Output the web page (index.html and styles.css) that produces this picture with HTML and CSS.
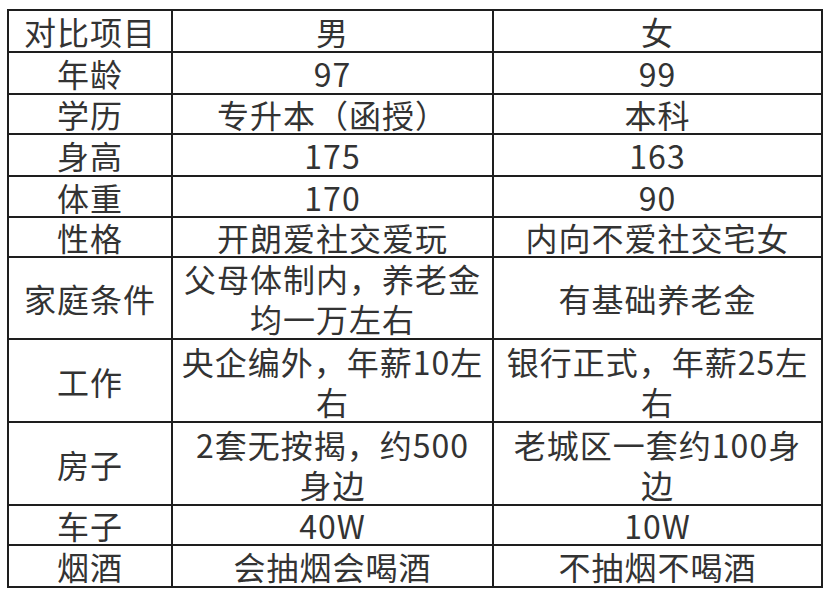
FILE: index.html
```html
<!DOCTYPE html>
<html lang="zh-CN">
<head>
<meta charset="utf-8">
<title>对比项目</title>
<link rel="stylesheet" href="styles.css">
</head>
<body>
<div class="sheet">
  <div class="cell">对比项目</div><div class="cell">男</div><div class="cell">女</div>
  <div class="cell">年龄</div><div class="cell">97</div><div class="cell">99</div>
  <div class="cell">学历</div><div class="cell">专升本（函授）</div><div class="cell">本科</div>
  <div class="cell">身高</div><div class="cell">175</div><div class="cell">163</div>
  <div class="cell">体重</div><div class="cell">170</div><div class="cell">90</div>
  <div class="cell">性格</div><div class="cell">开朗爱社交爱玩</div><div class="cell">内向不爱社交宅女</div>
  <div class="cell">家庭条件</div><div class="cell two">父母体制内，养老金<br>均一万左右</div><div class="cell">有基础养老金</div>
  <div class="cell">工作</div><div class="cell two">央企编外，年薪10左<br>右</div><div class="cell two">银行正式，年薪25左<br>右</div>
  <div class="cell">房子</div><div class="cell two">2套无按揭，约500<br>身边</div><div class="cell two">老城区一套约100身<br>边</div>
  <div class="cell">车子</div><div class="cell">40W</div><div class="cell">10W</div>
  <div class="cell">烟酒</div><div class="cell">会抽烟会喝酒</div><div class="cell">不抽烟不喝酒</div>
</div>
</body>
</html>
```

FILE: styles.css
```css
html, body {
  margin: 0;
  padding: 0;
  background: #ffffff;
}
body {
  padding: 9px 0 0 7px;
  font-family: "Noto Sans CJK SC", "Noto Sans", sans-serif;
  color: #333333;
}
.sheet {
  display: grid;
  grid-template-columns: 162px 319px 327px;
  grid-template-rows: 40px 40px 38px 40px 39px 38px 80px 81px 81px 38px 40px;
  gap: 2px;
  padding: 2px;
  width: max-content;
  background: #1e1e1e;
}
.cell {
  background: #ffffff;
  display: flex;
  align-items: center;
  justify-content: center;
  text-align: center;
  font-size: 32px;
  letter-spacing: 1px;
  line-height: 36px;
  white-space: nowrap;
}
.cell.two {
  line-height: 40px;
}
```
